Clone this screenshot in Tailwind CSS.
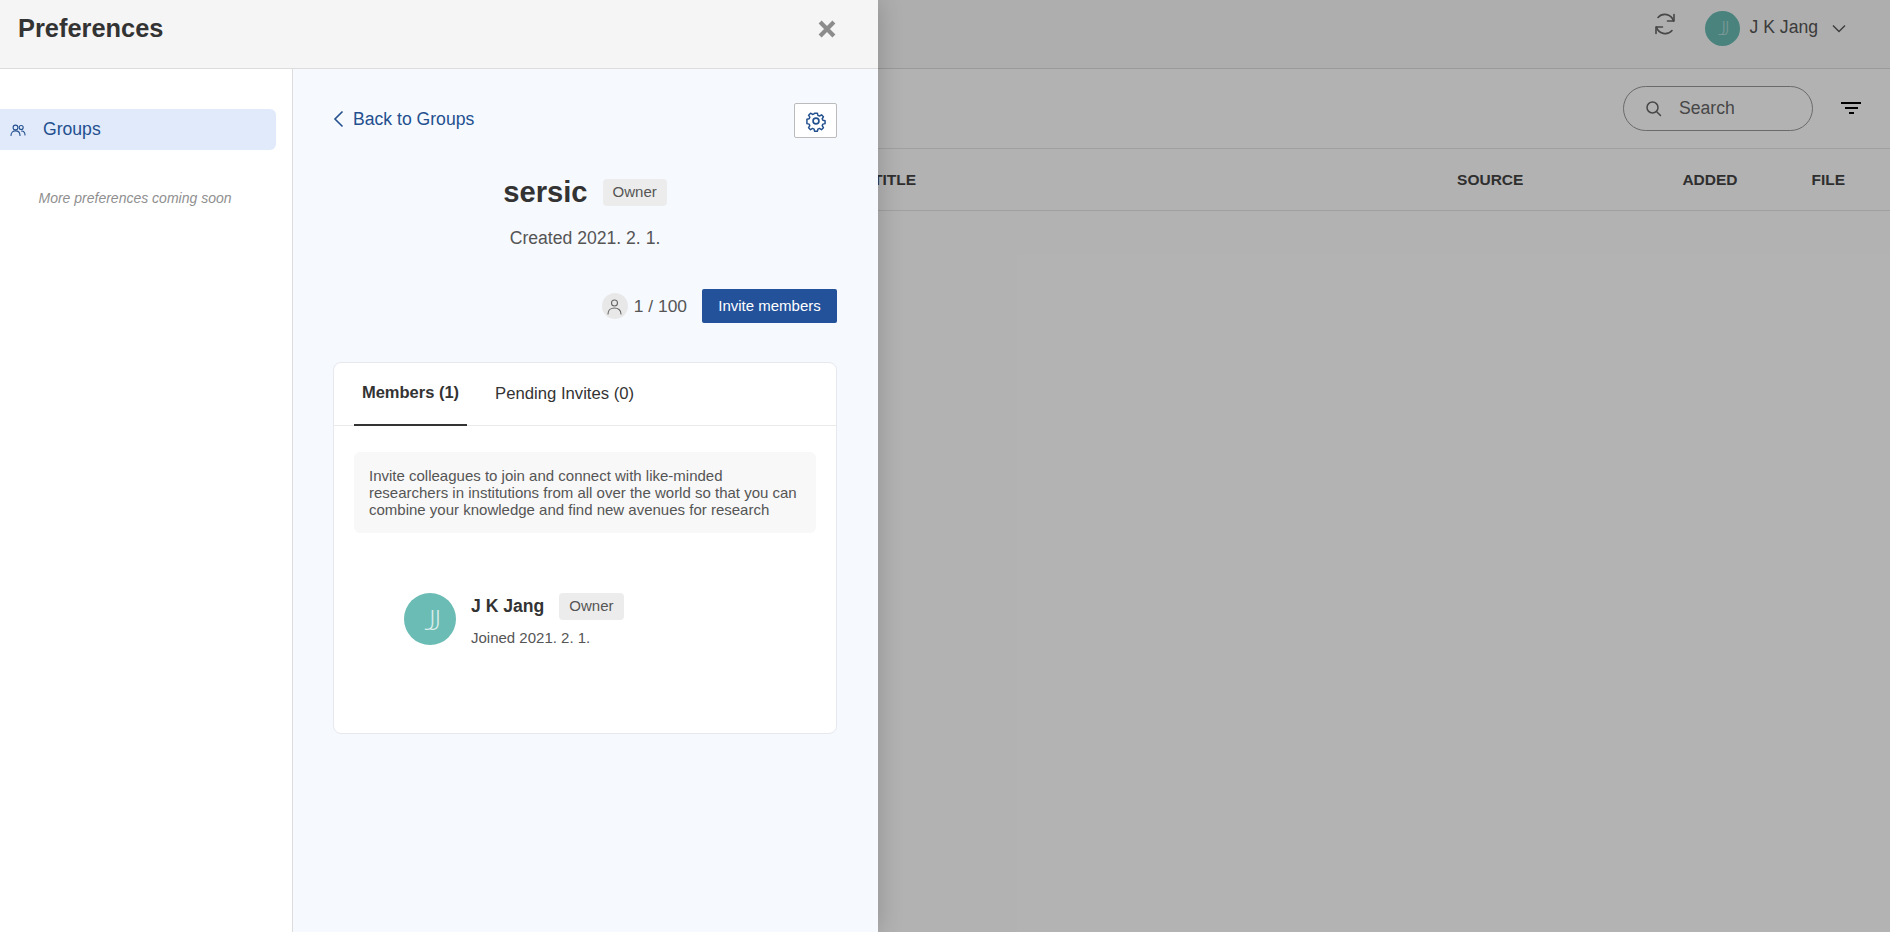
<!DOCTYPE html>
<html lang="en">
<head>
  <meta charset="UTF-8">
  <meta name="viewport" content="width=device-width, initial-scale=1.0">
  <title>Preferences</title>
  <script src="https://cdn.jsdelivr.net/npm/@tailwindcss/browser@4"></script>
</head>
<body class="relative h-[932px] overflow-hidden bg-white font-['Liberation_Sans',Arial,sans-serif] text-[#333]">

  <!-- app behind the drawer -->
  <div class="h-[932px]">
    <header class="flex h-[69px] items-start justify-end border-b border-[#dcdcdc] bg-[#fafafa] pr-[44px]">
      <svg class="mt-[12px] mr-[28px] h-[24px] w-[24px] text-[#666]" viewBox="0 0 24 24" fill="none" stroke="currentColor" stroke-width="1.6" stroke-linecap="round" stroke-linejoin="round">
        <path d="M21 2.5v6.5h-6.5"/><path d="M3 21.5V15h6.5"/><path d="M20.5 9A9 9 0 0 0 5 5.5"/><path d="M3.5 15A9 9 0 0 0 19 18.5"/>
      </svg>
      <div class="mt-[11px] flex h-[35px] w-[35px] items-center justify-center rounded-full bg-[#6bbcb4] font-['Lato',sans-serif] text-[19px] font-light tracking-[-0.2em] text-white/50">JJ</div>
      <span class="mt-[17px] ml-[10px] text-[17.6px] leading-[20px] text-[#555]">J K Jang</span>
      <svg class="mt-[24px] ml-[14px] h-[9px] w-[14px] text-[#555]" viewBox="0 0 14 9" fill="none" stroke="currentColor" stroke-width="1.4"><path d="M1 1.5l6 6 6-6"/></svg>
    </header>
    <div class="flex h-[80px] items-start justify-end border-b border-[#e6e6e6] pr-[29px]">
      <div class="mt-[17px] flex h-[45px] w-[190px] items-center rounded-full border border-[#999] pl-[21px]">
        <svg class="h-[17px] w-[17px] text-[#666]" viewBox="0 0 17 17" fill="none" stroke="currentColor" stroke-width="1.5" stroke-linecap="round"><circle cx="7.5" cy="7.5" r="5.5"/><path d="M11.7 11.7l3.8 3.8"/></svg>
        <span class="ml-[17px] text-[17.6px] text-[#666]">Search</span>
      </div>
      <div class="mt-[33px] ml-[28px] flex w-[20px] flex-col items-center gap-[3px]">
        <div class="h-[2px] w-[20px] bg-black"></div>
        <div class="h-[2px] w-[13px] bg-black"></div>
        <div class="h-[2px] w-[5px] bg-black"></div>
      </div>
    </div>
    <div class="flex h-[62px] items-center border-b border-[#e6e6e6] text-[15.5px] font-bold text-[#444]">
      <span class="ml-[873px]">TITLE</span>
      <span class="ml-[541px]">SOURCE</span>
      <span class="ml-[159px]">ADDED</span>
      <span class="ml-[74px]">FILE</span>
    </div>
  </div>

  <!-- dim layer -->
  <div class="absolute inset-0 bg-black/30"></div>

  <!-- preferences drawer -->
  <aside class="absolute top-0 bottom-0 left-0 flex w-[878px] flex-col bg-white shadow-[0_0_24px_rgba(0,0,0,0.2)]">
    <div class="flex h-[69px] shrink-0 items-start justify-between border-b border-[#dcdcdc] bg-[#f5f5f5] pr-[42px] pl-[18px]">
      <h1 class="mt-[13px] text-[25.4px] leading-[30px] font-bold text-[#333]">Preferences</h1>
      <svg class="mt-[20px] h-[18px] w-[18px] text-[#8c8c8c]" viewBox="0 0 17 17" fill="none" stroke="currentColor" stroke-width="4"><path d="M2 2l13 13M15 2L2 15"/></svg>
    </div>

    <div class="flex min-h-0 flex-1">
      <nav class="w-[293px] shrink-0 border-r border-[#dcdcdc] bg-white pt-[40px]">
        <div class="flex h-[41px] w-[276px] items-center rounded-r-[6px] bg-[#e1eafa] pl-[10px] text-[#23508f]">
          <svg class="h-[16px] w-[16px]" viewBox="0 0 16 16" fill="none" stroke="currentColor" stroke-width="1.1" stroke-linecap="round">
            <circle cx="5.5" cy="5.5" r="2.4"/><circle cx="11.2" cy="5.5" r="2"/>
            <path d="M1 13.5c0-3 2-4.6 4.5-4.6s4.5 1.6 4.5 4.6"/><path d="M11.5 9c2 .1 3.5 1.6 3.5 4"/>
          </svg>
          <span class="ml-[17px] text-[17.6px]">Groups</span>
        </div>
        <p class="mt-[38px] w-[270px] text-center text-[14px] text-[#8f8f8f] italic">More preferences coming soon</p>
      </nav>

      <main class="flex-1 bg-[#f6f9fe] pt-[34px] pr-[41px] pl-[40px]">
        <div class="flex items-start justify-between">
          <a class="mt-[6px] flex items-center text-[17.6px] leading-[20px] text-[#23508f]">
            <svg class="mr-[9px] h-[18px] w-[11px]" viewBox="0 0 11 18" fill="none" stroke="currentColor" stroke-width="1.6"><path d="M9.5 1.5L2 9l7.5 7.5"/></svg>
            Back to Groups
          </a>
          <button class="flex h-[35px] w-[43px] items-center justify-center rounded-[2px] border border-[#bbb] bg-white text-[#23508f]">
            <svg class="h-[22px] w-[22px]" viewBox="0 0 24 24" fill="none" stroke="currentColor" stroke-width="1.8" stroke-linejoin="round">
              <path d="M10.3 2.6h3.4l.6 2.7 1.9.8 2.4-1.5 2.4 2.4-1.5 2.4.8 1.9 2.7.6v3.4l-2.7.6-.8 1.9 1.5 2.4-2.4 2.4-2.4-1.5-1.9.8-.6 2.7h-3.4l-.6-2.7-1.9-.8-2.4 1.5-2.4-2.4 1.5-2.4-.8-1.9-2.7-.6V10l2.7-.6.8-1.9-1.5-2.4 2.4-2.4 2.4 1.5 1.9-.8z" transform="translate(1.2 1.1) scale(.9)"/>
              <circle cx="12" cy="12" r="3.2"/>
            </svg>
          </button>
        </div>

        <div class="mt-[36px] flex items-center justify-center gap-[15px]">
          <h2 class="text-[29.2px] leading-[36px] font-bold text-[#333]">sersic</h2>
          <span class="flex h-[27px] items-center rounded-[4px] bg-[#ececec] px-[10px] text-[15px] text-[#555]">Owner</span>
        </div>
        <p class="mt-[18px] text-center text-[17.6px] leading-[20px] text-[#555]">Created 2021. 2. 1.</p>

        <div class="mt-[41px] flex items-center justify-end">
          <div class="flex h-[26px] w-[26px] items-center justify-center rounded-full bg-[#e8e8e8] text-[#666]">
            <svg class="h-[17px] w-[17px]" viewBox="0 0 17 17" fill="none" stroke="currentColor" stroke-width="1.1" stroke-linecap="round"><circle cx="8.5" cy="5" r="3"/><path d="M2 16c0-4 3-6 6.5-6s6.5 2 6.5 6"/></svg>
          </div>
          <span class="ml-[6px] text-[17.4px] text-[#555]">1 / 100</span>
          <button class="ml-[15px] h-[34px] w-[135px] rounded-[2px] bg-[#23529b] text-[15px] text-white">Invite members</button>
        </div>

        <section class="mt-[39px] h-[372px] rounded-[8px] border border-[#e6e8ee] bg-white">
          <div class="flex h-[63px] border-b border-[#eaeaea] pl-[20px]">
            <div class="flex h-[63px] w-[113px] items-center justify-center border-b-2 border-[#333] pb-[3px] text-[16.5px] font-bold text-[#333]">Members (1)</div>
            <div class="flex h-[62px] items-center pb-[1px] pl-[28px] text-[16.7px] text-[#333]">Pending Invites (0)</div>
          </div>
          <div class="mx-[20px] mt-[26px] rounded-[6px] bg-[#f8f8f8] px-[15px] py-[15px] text-[15px] leading-[17px] text-[#555]">
            Invite colleagues to join and connect with like-minded researchers in institutions from all over the world so that you can combine your knowledge and find new avenues for research
          </div>
          <div class="mt-[60px] ml-[70px] flex items-start">
            <div class="flex h-[52px] w-[52px] items-center justify-center rounded-full bg-[#6bbcb4] font-['Lato',sans-serif] text-[28px] font-light tracking-[-0.2em] text-white/75">JJ</div>
            <div class="ml-[15px]">
              <div class="flex items-center">
                <span class="text-[17.6px] font-bold text-[#333]">J K Jang</span>
                <span class="ml-[15px] flex h-[27px] items-center rounded-[4px] bg-[#ececec] px-[10px] text-[15px] text-[#555]">Owner</span>
              </div>
              <p class="mt-[9px] text-[15px] leading-[17px] text-[#555]">Joined 2021. 2. 1.</p>
            </div>
          </div>
        </section>
      </main>
    </div>
  </aside>
</body>
</html>
